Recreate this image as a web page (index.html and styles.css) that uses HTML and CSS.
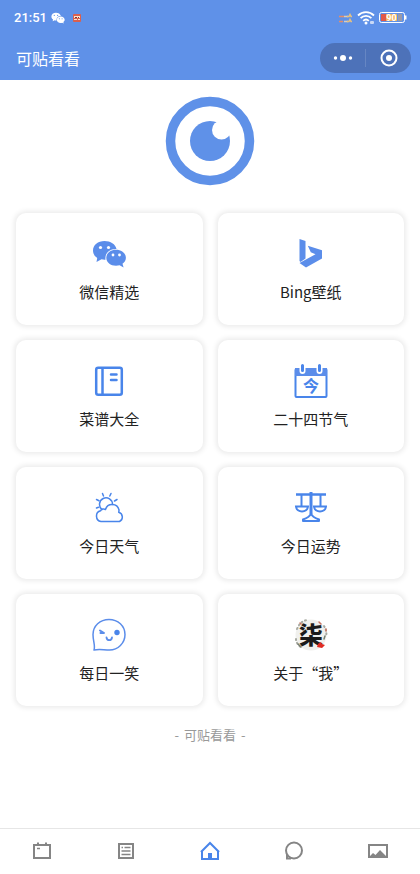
FILE: index.html
```html
<!DOCTYPE html>
<html lang="zh-CN">
<head>
    <meta charset="UTF-8">
    <meta name="viewport" content="width=device-width, initial-scale=1.0">
    <title>可贴看看</title>
    <link rel="stylesheet" href="styles.css">
</head>
<body>
    <header class="header">
        <div class="status-bar">
            <div class="status-left">
                <span class="status-time">21:51</span>
                <svg class="status-wechat" width="14" height="12" viewBox="0 0 34 28">
                    <path fill="#fff" d="M12 1C5.500 1 1 5 1 10.500c0 3 1.500 5.500 4 7.200L4 22l5-2.500c1.500.4 3 .5 4.500.4C12.500 13 18 8.500 24 9 22.500 4 18 1 12 1z"/>
                    <path fill="#fff" d="M23.500 10.500c-5.500 0-9.500 3.400-9.500 7.700s4 7.700 9.500 7.700c1.300 0 2.500-.2 3.600-.5L31 27.500l-1-3.600c2-1.400 3.200-3.400 3.200-5.700 0-4.300-4.200-7.700-9.700-7.700z"/>
                    <g fill="#5f91e8"><circle cx="8" cy="7.500" r="1.600"/><circle cx="16" cy="7.500" r="1.600"/><circle cx="20.500" cy="16" r="1.300"/><circle cx="27" cy="16" r="1.300"/></g>
                </svg>
                <svg class="status-app" width="8" height="8" viewBox="0 0 8 8">
                    <rect width="8" height="8" rx="1" fill="#d9604f"/>
                    <path d="M1 2h6v1H1zM1 3h1v1H1zM4 3h1v1H4zM6 3h1v1H6zM1 5h3v1H1zM5 5h2v1H5z" fill="#fbe3cf"/>
                    <path d="M2 3h2v1H2zM5 3h1v1H5z" fill="#7b3a3f"/>
                </svg>
            </div>
            <div class="status-right">
                <svg width="14" height="10" viewBox="0 0 14 10">
                    <g stroke-width="1.500" fill="none">
                        <path d="M0 3.500h5M0 8.500h4" stroke="#e58e67"/>
                        <path d="M5 3.500h4M5 8.500h4" stroke="#d9cdbc"/>
                        <path d="M8 3.500h2l1-2 1 2h1M8 8.500h2l1-2 1 2h1" stroke="#e6c181"/>
                    </g>
                </svg>
                <svg width="18" height="14" viewBox="0 0 18 14">
                    <g fill="none" stroke="#fff" stroke-width="1.800">
                        <path d="M1 4.500c4.500-4.500 11.500-4.500 16 0"/>
                        <path d="M3.600 7.200c3-3 7.800-3 10.800 0"/>
                        <path d="M6.200 9.800c1.600-1.500 4-1.500 5.600 0"/>
                    </g>
                    <circle cx="9" cy="12" r="1.500" fill="#fff"/>
                    <rect x="13" y="10" width="4" height="3" rx="1" fill="#c9d9f6"/>
                </svg>
                <svg width="28" height="12" viewBox="0 0 28 12">
                    <rect x="0.500" y="0.500" width="25" height="10" rx="2" fill="#5f91e8" stroke="#fff"/>
                    <rect x="2" y="2" width="5" height="7" fill="#e0584a"/>
                    <rect x="7" y="2" width="11" height="7" fill="#f0b35d"/>
                    <rect x="19" y="2" width="4" height="7" fill="#9a9aa8"/>
                    <path d="M26 3.500h1.500v4H26z" fill="#fff"/>
                    <text class="battery-text" x="12.500" y="9" text-anchor="middle">90</text>
                </svg>
            </div>
        </div>
        <div class="nav-bar">
            <h1 class="nav-title">可贴看看</h1>
            <div class="capsule">
                <button class="capsule-button" type="button" aria-label="更多">
                    <svg width="20" height="8" viewBox="0 0 20 8" fill="#fff">
                        <circle cx="2.500" cy="4" r="1.700"/><circle cx="10" cy="4" r="3"/><circle cx="17.500" cy="4" r="1.700"/>
                    </svg>
                </button>
                <button class="capsule-button" type="button" aria-label="关闭">
                    <svg width="18" height="18" viewBox="0 0 18 18">
                        <circle cx="9" cy="9" r="7.500" fill="none" stroke="#fff" stroke-width="2"/>
                        <circle cx="9" cy="9" r="3" fill="#fff"/>
                    </svg>
                </button>
            </div>
        </div>
    </header>

    <main class="content">
        <svg class="logo" width="90" height="90" viewBox="0 0 90 90">
            <circle cx="45" cy="45" r="39.500" fill="none" stroke="#5f91e8" stroke-width="9.500"/>
            <circle cx="45" cy="45" r="20" fill="#5f91e8"/>
            <circle cx="56.500" cy="34" r="9.500" fill="#fff"/>
        </svg>

        <nav class="card-grid">
            <a class="card" href="#wechat">
                <svg class="card-icon" viewBox="0 0 36 36">
                    <g transform="translate(1 4)">
                        <path fill="#5b8dea" d="M12.500 1C6 1 1 5 1 10.500c0 3.200 1.600 5.700 4.200 7.400L4.500 22l5-2.700c1.500.4 2.600.5 4 .4C12.500 13.500 17.500 8.500 24.500 9 23.500 4 18.500 1 12.500 1z"/>
                        <path fill="#5b8dea" d="M24 9.800c-5.500 0-9.700 3.500-9.700 7.900 0 4.500 4.200 8 9.700 8 1.300 0 2.500-.2 3.600-.5l4 2.300-1.100-3.700c2.100-1.500 3.400-3.600 3.400-6.100 0-4.400-4.400-7.900-9.900-7.900z"/>
                        <g fill="#fff"><circle cx="8.500" cy="7.500" r="1.600"/><circle cx="16.500" cy="7.500" r="1.600"/><circle cx="21" cy="15" r="1.400"/><circle cx="27.500" cy="15" r="1.400"/></g>
                    </g>
                </svg>
                <span class="card-label">微信精选</span>
            </a>
            <a class="card" href="#bing">
                <svg class="card-icon" viewBox="0 0 36 36" fill="#5b8dea">
                    <path d="M6.500 3l6 2v17.500L7.500 26l-1-1z"/>
                    <path d="M14.800 9.800L29 14.300v8.200L13 31.500 6.500 27 22.500 18.200l-4.700-2z"/>
                </svg>
                <span class="card-label">Bing壁纸</span>
            </a>
            <a class="card" href="#recipes">
                <svg class="card-icon" viewBox="0 0 36 36" fill="none" stroke="#4985ea" stroke-width="2.500">
                    <rect x="5.200" y="4.700" width="25.600" height="27" rx="2"/>
                    <path d="M11.500 4.500v27"/>
                    <path d="M20 11.500h5.500M20 17h5.500" stroke-linecap="round"/>
                </svg>
                <span class="card-label">菜谱大全</span>
            </a>
            <a class="card" href="#solar-terms">
                <svg class="card-icon" viewBox="0 0 36 36">
                    <rect x="2.500" y="6" width="31" height="28" rx="1" fill="#fff" stroke="#4985ea" stroke-width="2"/>
                    <path d="M2 5h32v8H2z" fill="#5b8dea"/>
                    <path d="M9.500 3v5M26.500 3v5" stroke="#fff" stroke-width="6" stroke-linecap="round"/>
                    <path d="M9.500 2.500v5M26.500 2.500v5" stroke="#4985ea" stroke-width="3" stroke-linecap="round"/>
                    <text class="calendar-text" x="18" y="29" text-anchor="middle">今</text>
                </svg>
                <span class="card-label">二十四节气</span>
            </a>
            <a class="card" href="#weather">
                <svg class="card-icon" viewBox="0 0 36 36" fill="none" stroke="#4985ea" stroke-width="1.500" stroke-linecap="round" stroke-linejoin="round">
                    <path d="M11 19.500A6.500 6.500 0 1 1 21.500 14.500"/>
                    <path d="M11.500 3.500l1 2.500M20 3.500l-1.200 2.500M5.500 9.500l2.500 1.200M26 9.500l-2.500 1.500M5.500 18l2-.7"/>
                    <path d="M10 31.500a5.500 5.500 0 0 1-.5-10.700 3.500 3.500 0 0 1 5-1.300A7 7 0 0 1 28 20c0 1 0 1.500-.3 2.200a5 5 0 0 1 .8 9.300z"/>
                </svg>
                <span class="card-label">今日天气</span>
            </a>
            <a class="card" href="#fortune">
                <svg class="card-icon" viewBox="0 0 36 36" fill="none" stroke="#4985ea" stroke-width="2">
                    <path d="M3 4.500h30" stroke-width="2.500"/>
                    <path d="M18 2v22" stroke-width="3"/>
                    <path d="M8.500 5v11M27.500 5v11"/>
                    <path d="M3 16.500h12c-.5 6.500-11.500 6.500-12 0zM21 16.500h12c-.5 6.500-11.500 6.500-12 0z"/>
                    <path d="M18 23.500c-1 3-3.500 4.500-8 6v1.500h16v-1.500c-4.500-1.500-7-3-8-6z" stroke-linejoin="round"/>
                </svg>
                <span class="card-label">今日运势</span>
            </a>
            <a class="card" href="#jokes">
                <svg class="card-icon" viewBox="0 0 36 36" fill="none" stroke="#5b8dea" stroke-width="1.500" stroke-linecap="round" stroke-linejoin="round">
                    <path d="M3 33C4.500 29 2 24 2 17.500 2 9 9 2.500 18 2.500S34 9 34 17.500 27 33 18.500 33c-6 0-10-1.500-15.500 0z"/>
                    <path d="M9 13.500l4 2.500H9.500" stroke-width="2"/>
                    <circle cx="26" cy="15.500" r="2.700" fill="#4985ea" stroke="none"/>
                    <path d="M15.500 20.500c.5 3.500 5 3.500 5.500 0" stroke-width="1.800"/>
                </svg>
                <span class="card-label">每日一笑</span>
            </a>
            <a class="card" href="#about">
                <svg class="card-icon" viewBox="0 0 36 36">
                    <circle cx="18" cy="18" r="15.500" fill="#f0f0ed"/>
                    <g fill="none" stroke-linecap="round">
                        <path d="M4 12c2-5 5-8 10-9M3 22c0 4 3 7 6 9M31 9c2 3 3 6 2 11" stroke="#a8aaa2" stroke-width="2" stroke-dasharray="1 3"/>
                        <path d="M26 5l2 2M7 6l1 1M33 12v2" stroke="#c97663" stroke-width="1.500"/>
                        <path d="M5 27l3 3M31 22l1-3" stroke="#747c6e" stroke-width="1.500"/>
                    </g>
                    <text class="seven-text" x="18" y="27" text-anchor="middle">柒</text>
                    <path d="M25 27l3-2 1 2 3 1-3 3-5-1z" fill="#e02b23"/>
                </svg>
                <span class="card-label">关于“我”</span>
            </a>
        </nav>

        <p class="footer-text"><span>-</span><span>可贴看看</span><span>-</span></p>
    </main>

    <nav class="tab-bar">
        <a class="tab" href="#calendar" aria-label="日历">
            <svg width="20" height="20" viewBox="0 0 20 20" fill="none" stroke="#858585" stroke-width="2">
                <path d="M2 4h16v13H2z"/>
                <path d="M6 1.500V4M14 1.500V4"/>
                <path d="M5 7.500h3" stroke-width="1.500"/>
            </svg>
        </a>
        <a class="tab" href="#news" aria-label="资讯">
            <svg width="20" height="20" viewBox="0 0 20 20" fill="none" stroke="#858585" stroke-width="2">
                <path d="M3 3h14v14H3z"/>
                <path d="M5.500 6.500H7M8.500 6.500h6M5.500 10h9M5.500 13.500h9" stroke-width="1.500"/>
            </svg>
        </a>
        <a class="tab" href="#home" aria-label="首页">
            <svg width="20" height="20" viewBox="0 0 20 20" fill="none" stroke="#4985ea" stroke-width="2">
                <path d="M1 11L10 2l9 9"/>
                <path d="M2 10v8h16v-8"/>
                <path d="M8 18v-6h4v6z" fill="#4985ea" stroke="none"/>
            </svg>
        </a>
        <a class="tab" href="#chat" aria-label="消息">
            <svg width="20" height="20" viewBox="0 0 20 20" fill="none" stroke="#858585" stroke-width="2">
                <circle cx="10" cy="9.500" r="8"/>
                <path d="M3 13v4.500h4"/>
            </svg>
        </a>
        <a class="tab" href="#gallery" aria-label="图片">
            <svg width="20" height="20" viewBox="0 0 20 20">
                <path d="M1 4h18v12H1z" fill="none" stroke="#858585" stroke-width="2"/>
                <path d="M2 15l3-3 2.500 2 4.500-5 6 6v1H2z" fill="#858585"/>
            </svg>
        </a>
    </nav>
</body>
</html>
```
FILE: styles.css
```css
* {
    box-sizing: border-box;
}

body {
    display: flex;
    flex-direction: column;
    min-height: 100vh;
    margin: 0;
    background-color: #fff;
    font-family: 'Noto Sans CJK SC', sans-serif;
    color: #222;
}

a {
    color: inherit;
    text-decoration: none;
}

svg {
    display: block;
}

.header {
    background-color: #5f91e8;
    color: #fff;
}

.status-bar {
    display: flex;
    justify-content: space-between;
    align-items: center;
    height: 36px;
    padding: 0 13px 0 14px;
}

.status-left,
.status-right {
    display: flex;
    align-items: center;
    gap: 4px;
}

.status-time {
    font-family: 'Roboto', sans-serif;
    font-size: 13px;
    font-weight: 500;
    line-height: 16px;
}

.status-app {
    margin-left: 4px;
}

.battery-text {
    font-family: 'Roboto', sans-serif;
    font-size: 9px;
    font-weight: bold;
    fill: #fff;
}

.nav-bar {
    display: flex;
    justify-content: space-between;
    align-items: center;
    height: 44px;
    padding: 0 9px 0 16px;
}

.nav-title {
    margin: 0;
    font-size: 16px;
    font-weight: normal;
    line-height: 24px;
}

.capsule {
    display: flex;
    width: 91px;
    height: 30px;
    border-radius: 15px;
    background-color: #4d72b9;
}

.capsule-button {
    display: flex;
    flex: 1;
    justify-content: center;
    align-items: center;
    margin: 6px 0;
    padding: 0;
    border: none;
    background: none;
    cursor: pointer;
}

.capsule-button + .capsule-button {
    border-left: 1px solid #6686c3;
}

.content {
    flex: 1;
}

.logo {
    margin: 16px auto 27px;
}

.card-grid {
    display: grid;
    grid-template-columns: 1fr 1fr;
    gap: 15px;
    padding: 0 16px;
}

.card {
    display: flex;
    flex-direction: column;
    align-items: center;
    gap: 9px;
    padding: 23px 0 22px;
    border-radius: 10px;
    background-color: #fff;
    box-shadow: 0 0 5px 2px rgba(0, 0, 0, 0.08);
}

.card-icon {
    width: 36px;
    height: 36px;
    overflow: visible;
}

.card-label {
    font-size: 15px;
    line-height: 22px;
}

.calendar-text {
    font-size: 16px;
    font-weight: bold;
    fill: #4985ea;
}

.seven-text {
    font-size: 24px;
    font-weight: 900;
    fill: #1b1b1b;
}

.footer-text {
    display: flex;
    justify-content: center;
    gap: 5px;
    margin: 19px 0;
    font-size: 13px;
    line-height: 20px;
    color: #999;
}

.tab-bar {
    display: flex;
    height: 46px;
    padding-bottom: 2px;
    border-top: 1px solid #e6e6e6;
}

.tab {
    display: flex;
    flex: 1;
    justify-content: center;
    align-items: center;
}
```
